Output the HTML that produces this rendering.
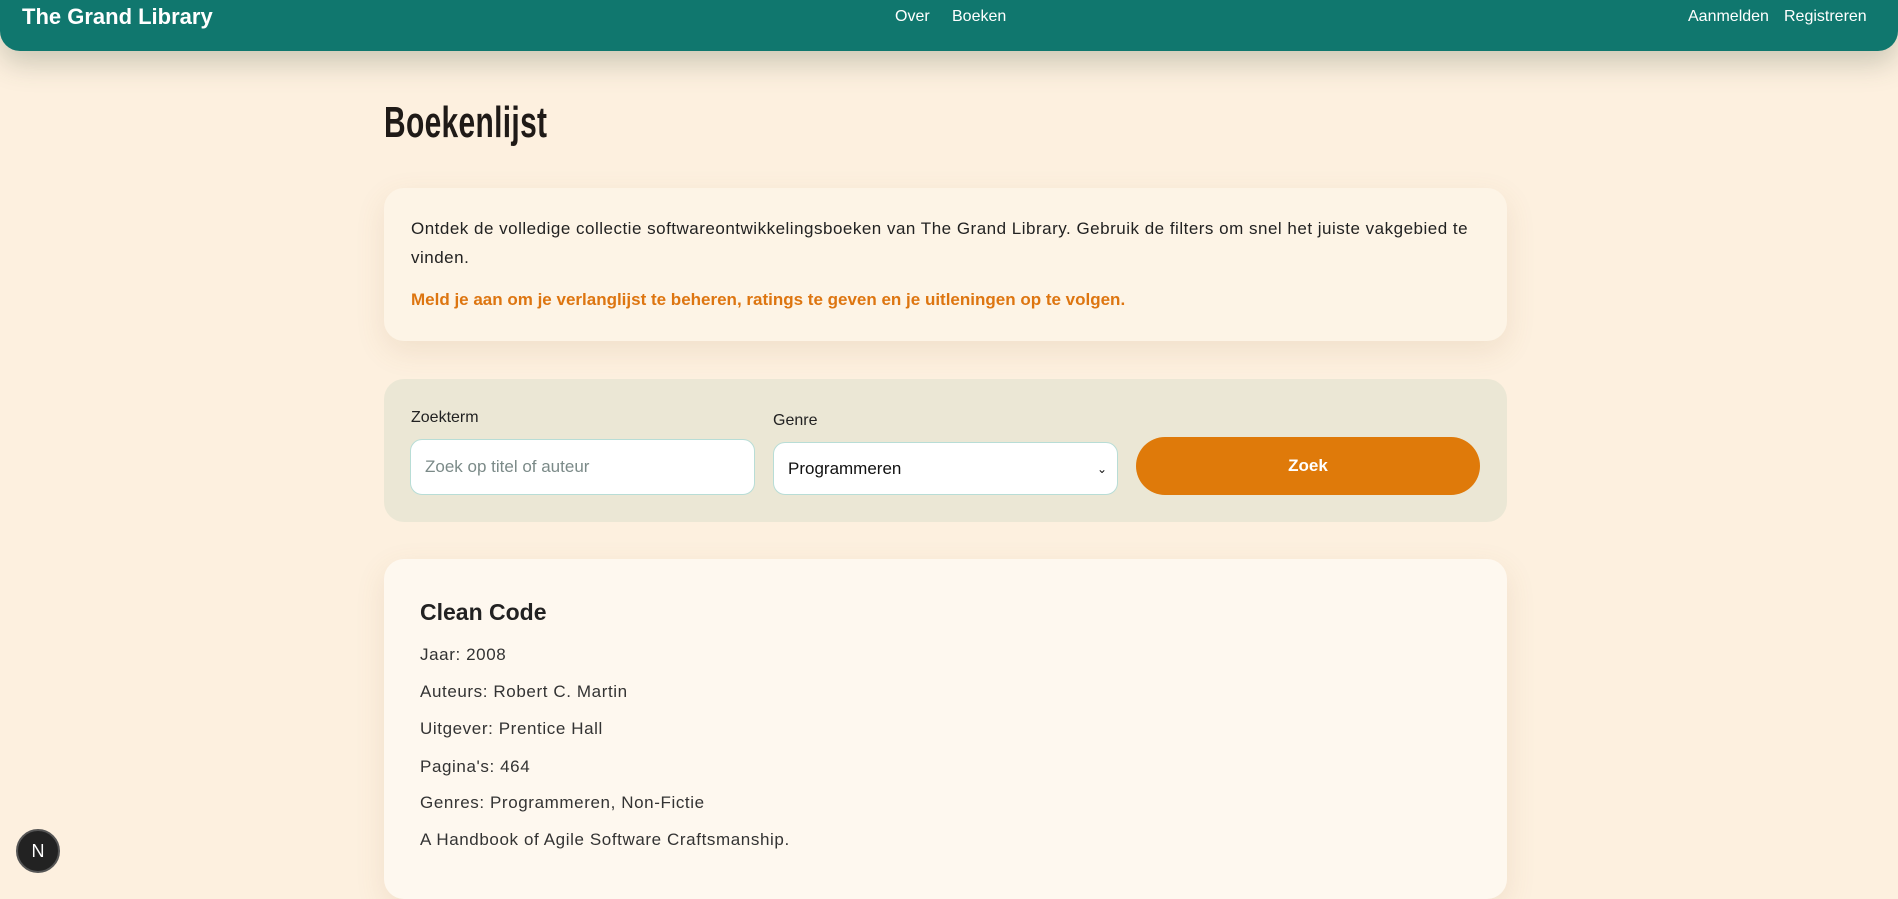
<!DOCTYPE html>
<html><head><meta charset="utf-8"><style>
*{box-sizing:border-box;margin:0;padding:0}
body{width:1898px;height:869px;overflow:hidden;background:#fdf0df;font-family:"Liberation Sans",sans-serif;color:#222;position:relative}
nav{position:absolute;left:0;top:0;width:1898px;height:51px;background:#10776e;border-radius:0 0 20px 20px;box-shadow:0 12px 28px rgba(60,80,60,.25);color:#fff}
nav .brand{position:absolute;left:22px;top:4px;font-size:22px;font-weight:bold}
nav a{position:absolute;top:8px;font-size:16px;color:#fff;text-decoration:none}
h1{position:absolute;left:384px;top:98px;font-size:44px;font-weight:bold;transform:scaleX(.68);transform-origin:left;color:#1f1a17;letter-spacing:.5px}
.card{position:absolute;left:384px;width:1123px;border-radius:20px}
.c1{top:188px;height:153px;background:#fdf4e6;box-shadow:0 10px 30px rgba(150,110,60,.12)}
.c1 p{position:absolute;left:27px;font-size:17px;line-height:29px;letter-spacing:.5px}
.c2{top:379px;height:143px;background:#ebe7d5}
.lbl{position:absolute;font-size:16px;color:#222}
.inp{position:absolute;background:#fff;border:1.5px solid #b8ddd6;border-radius:12px;font-size:17px;padding-left:14px;display:flex;align-items:center}
.btn{position:absolute;left:752px;top:58px;width:344px;height:58px;background:#df7a0a;border-radius:29px;color:#fff;font-weight:bold;font-size:17px;display:flex;align-items:center;justify-content:center}
.c3{top:559px;height:340px;background:#fef8ef;box-shadow:0 10px 30px rgba(150,110,60,.12)}
.c3 h2{position:absolute;left:36px;top:40px;font-size:23px}
.c3 p{position:absolute;left:36px;font-size:17px;color:#333;letter-spacing:.6px}
.n{position:absolute;left:16px;top:829px;width:44px;height:44px;border-radius:50%;background:#222;border:2px solid #555;color:#fff;font-size:18px;display:flex;align-items:center;justify-content:center}
</style></head><body>
<nav><div class="brand">The Grand Library</div>
<a style="left:895px">Over</a><a style="left:952px">Boeken</a>
<a style="left:1688px">Aanmelden</a><a style="left:1784px">Registreren</a></nav>
<h1>Boekenlijst</h1>
<div class="card c1">
<p style="top:26px">Ontdek de volledige collectie softwareontwikkelingsboeken van The Grand Library. Gebruik de filters om snel het juiste vakgebied te<br>vinden.</p>
<p style="top:97px;color:#dd7510;font-weight:bold;letter-spacing:0">Meld je aan om je verlanglijst te beheren, ratings te geven en je uitleningen op te volgen.</p>
</div>
<div class="card c2">
<div class="lbl" style="left:27px;top:30px">Zoekterm</div>
<div class="lbl" style="left:389px;top:33px">Genre</div>
<div class="inp" style="left:26px;top:60px;width:345px;height:56px;color:#7b8a88">Zoek op titel of auteur</div>
<div class="inp" style="left:389px;top:63px;width:345px;height:53px;color:#111">Programmeren<span style="position:absolute;right:10px;font-size:12px">&#8964;</span></div>
<div class="btn">Zoek</div>
</div>
<div class="card c3">
<h2>Clean Code</h2>
<p style="top:86px">Jaar: 2008</p>
<p style="top:123px">Auteurs: Robert C. Martin</p>
<p style="top:160px">Uitgever: Prentice Hall</p>
<p style="top:198px">Pagina's: 464</p>
<p style="top:234px">Genres: Programmeren, Non-Fictie</p>
<p style="top:271px">A Handbook of Agile Software Craftsmanship.</p>
</div>
<div class="n">N</div>
</body></html>
